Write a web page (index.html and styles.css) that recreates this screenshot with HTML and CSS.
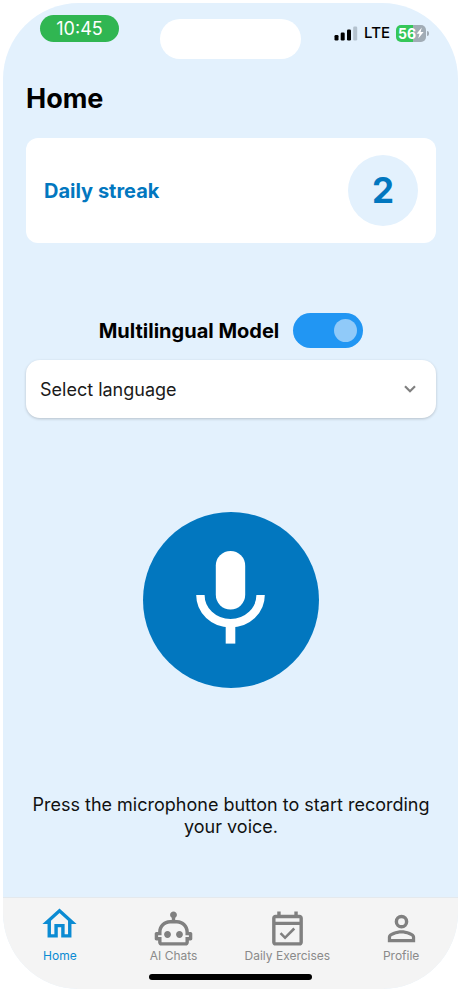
FILE: index.html
```html
<!DOCTYPE html>
<html lang="en">
<head>
<meta charset="utf-8">
<meta name="viewport" content="width=device-width, initial-scale=1">
<title>Home</title>
<link rel="stylesheet" href="styles.css">
</head>
<body>
<div class="phone">
  <header class="status">
    <div class="status-left"><time class="clock">10:45</time></div>
    <div class="island"></div>
    <div class="status-right">
      <svg class="signal" viewBox="0 0 24 16" aria-hidden="true">
        <rect x="0.5" y="10" width="4" height="5.5" rx="1.2"/>
        <rect x="6.7" y="7.5" width="4" height="8" rx="1.2"/>
        <rect x="13" y="4.5" width="4" height="11" rx="1.2"/>
        <rect x="19.2" y="1.5" width="4" height="14" rx="1.2" fill="#b4c2ce"/>
      </svg>
      <span class="network">LTE</span>
      <div class="battery">
        <span>56</span>
        <svg class="bolt" viewBox="0 0 8 12" aria-hidden="true"><path d="M5.8 0.5 0.6 6.8H3.5L2.3 11.5 7.6 5.1H4.6Z"/></svg>
      </div>
    </div>
  </header>

  <main class="content">
    <h1>Home</h1>
    <section class="streak">
      <h2>Daily streak</h2>
      <span class="count">2</span>
    </section>
    <div class="model">
      <label for="multi">Multilingual Model</label>
      <input class="switch" type="checkbox" role="switch" id="multi" checked>
    </div>
    <div class="picker">
      <select aria-label="Language">
        <option>Select language</option>
      </select>
      <svg class="chevron" viewBox="0 0 14 10" aria-hidden="true"><path d="M2 2.2 7 7.2 12 2.2"/></svg>
    </div>
    <button class="mic" type="button" aria-label="Record">
      <svg viewBox="0 0 176 176" aria-hidden="true">
        <rect x="72.8" y="39" width="29.4" height="58.5" rx="14.7" fill="#fff"/>
        <path d="M57.4 83C57.4 98.5 70.5 111.2 87.5 111.2S117.6 98.5 117.6 83" fill="none" stroke="#fff" stroke-width="8.4"/>
        <rect x="82.7" y="112" width="9.6" height="19.6" fill="#fff"/>
      </svg>
    </button>
    <p class="hint">Press the microphone button to start recording your voice.</p>
  </main>

  <footer class="bottom">
    <nav class="tabs">
      <a class="tab active" href="#home">
        <svg viewBox="0 2.7 24 24" aria-hidden="true"><path d="M12 5.69L17 10.19V18H15V12H9V18H7V10.19L12 5.69M12 3L2 12H5V20H11V14H13V20H19V12H22L12 3"/></svg>
        <span>Home</span>
      </a>
      <a class="tab" href="#chats">
        <svg viewBox="0 0 24 24" aria-hidden="true"><path d="M17.5 15.5C17.5 16.61 16.61 17.5 15.5 17.5S13.5 16.61 13.5 15.5 14.4 13.5 15.5 13.5 17.5 14.4 17.5 15.5M8.5 13.5C7.4 13.5 6.5 14.4 6.5 15.5S7.4 17.5 8.5 17.5 10.5 16.61 10.5 15.5 9.61 13.5 8.5 13.5M23 15V18C23 18.55 22.55 19 22 19H21V20C21 21.11 20.11 22 19 22H5C3.9 22 3 21.11 3 20V19H2C1.45 19 1 18.55 1 18V15C1 14.45 1.45 14 2 14H3C3 10.13 6.13 7 10 7H11V5.73C10.4 5.39 10 4.74 10 4C10 2.9 10.9 2 12 2S14 2.9 14 4C14 4.74 13.6 5.39 13 5.73V7H14C17.87 7 21 10.13 21 14H22C22.55 14 23 14.45 23 15M21 16H19V14C19 11.24 16.76 9 14 9H10C7.24 9 5 11.24 5 14V16H3V17H5V20H19V17H21V16Z"/></svg>
        <span>AI Chats</span>
      </a>
      <a class="tab" href="#exercises">
        <svg viewBox="0 -1 24 24" aria-hidden="true"><path d="M19 3H18V1H16V3H8V1H6V3H5C3.89 3 3 3.9 3 5V19C3 20.1 3.89 21 5 21H19C20.11 21 21 20.1 21 19V5C21 3.9 20.11 3 19 3M19 19H5V9H19V19M5 7V5H19V7H5M10.56 17.46L16.5 11.53L15.43 10.47L10.56 15.35L8.45 13.23L7.39 14.29L10.56 17.46Z"/></svg>
        <span>Daily Exercises</span>
      </a>
      <a class="tab" href="#profile">
        <svg viewBox="0 0 24 24" aria-hidden="true"><path d="M12 4A4 4 0 0 1 16 8A4 4 0 0 1 12 12A4 4 0 0 1 8 8A4 4 0 0 1 12 4M12 6A2 2 0 0 0 10 8A2 2 0 0 0 12 10A2 2 0 0 0 14 8A2 2 0 0 0 12 6M12 13C14.67 13 20 14.33 20 17V20H4V17C4 14.33 9.33 13 12 13M12 14.9C9.03 14.9 5.9 16.36 5.9 17V18.1H18.1V17C18.1 16.36 14.97 14.9 12 14.9Z"/></svg>
        <span>Profile</span>
      </a>
    </nav>
    <div class="home-bar"></div>
  </footer>
</div>
</body>
</html>
```
FILE: styles.css
```css
* { box-sizing: border-box; }

body {
  margin: 0;
  padding: 3px 0 1px 3px;
  min-height: 100vh;
  display: flex;
  background: #fff;
  color: #000;
  font-family: Inter, "Liberation Sans", sans-serif;
}

h1, h2, p { margin: 0; }

.phone {
  flex: 1;
  display: flex;
  flex-direction: column;
  background: #e3f1fd;
  border-radius: 76px;
  overflow: hidden;
}

/* Status bar */
.status {
  display: grid;
  grid-template-columns: 1fr 141px 1fr;
  align-items: start;
  padding: 12px 28px 0;
}

.status-left { padding-left: 9px; }

.clock {
  display: block;
  width: 79px;
  border-radius: 14px;
  background: #30b652;
  color: #fff;
  font-size: 18px;
  line-height: 27px;
  text-align: center;
}

.island {
  height: 40px;
  margin-top: 4px;
  border-radius: 20px;
  background: #fff;
}

.status-right {
  display: flex;
  justify-content: flex-end;
  align-items: center;
  gap: 6px;
  height: 36px;
  padding-right: 4px;
}

.signal { width: 24px; height: 16px; }

.network { font-size: 15px; font-weight: 500; line-height: 20px; }

.battery {
  position: relative;
  display: flex;
  align-items: center;
  justify-content: center;
  width: 30px;
  height: 17px;
  border-radius: 5px;
  background: linear-gradient(90deg, #35c759 56%, #a1acb5 56%);
  color: #fff;
  font-size: 14px;
  font-weight: 700;
  line-height: 17px;
}

.battery::after {
  content: "";
  position: absolute;
  right: -3px;
  top: 6px;
  width: 2px;
  height: 5px;
  border-radius: 0 2px 2px 0;
  background: #a1acb5;
}

.bolt { width: 8px; height: 12px; fill: #fff; }

/* Content */
.content {
  flex: 1;
  display: flex;
  flex-direction: column;
  padding: 23px 22px 0 23px;
}

h1 {
  font-size: 27px;
  font-weight: 700;
  line-height: 34px;
}

.streak {
  display: flex;
  align-items: center;
  justify-content: space-between;
  margin-top: 22px;
  padding: 17px 18px;
  border-radius: 12px;
  background: #fff;
  color: #0277bf;
}

h2 { font-size: 20px; font-weight: 700; line-height: 24px; }

.count {
  width: 70px;
  border-radius: 50%;
  background: #e3f1fd;
  font-size: 35px;
  font-weight: 700;
  line-height: 71px;
  text-align: center;
}

.model {
  display: flex;
  align-items: center;
  justify-content: center;
  gap: 14px;
  margin-top: 70px;
  font-size: 20px;
  font-weight: 700;
}

.switch {
  appearance: none;
  display: flex;
  align-items: center;
  justify-content: flex-start;
  width: 70px;
  height: 35px;
  margin: 0;
  padding: 0 6px;
  border-radius: 18px;
  background: #b0bec5;
}

.switch::before {
  content: "";
  width: 23px;
  height: 23px;
  border-radius: 50%;
  background: #90caf9;
}

.switch:checked { justify-content: flex-end; background: #2196f3; }

.picker { position: relative; margin-top: 12px; }

.picker select {
  appearance: none;
  display: block;
  width: 100%;
  height: 58px;
  padding: 0 48px 0 14px;
  border: 0;
  border-radius: 14px;
  background: #fff;
  box-shadow: 0 1px 3px rgba(0, 0, 0, 0.2);
  color: #1a1a1a;
  font: 18px Inter, "Liberation Sans", sans-serif;
}

.chevron {
  position: absolute;
  top: 24px;
  right: 19px;
  width: 14px;
  height: 10px;
  fill: none;
  stroke: #808080;
  stroke-width: 2.2;
  pointer-events: none;
}

.mic {
  align-self: center;
  width: 176px;
  height: 176px;
  margin-top: 94px;
  padding: 0;
  border: 0;
  border-radius: 50%;
  background: #0277bf;
}

.mic svg { display: block; width: 100%; }

.hint {
  margin-top: 106px;
  color: #111;
  font-size: 18px;
  line-height: 22px;
  text-align: center;
}

/* Bottom navigation */
.bottom { background: #f4f4f4; border-top: 1px solid #e4e9ed; }

.tabs {
  display: grid;
  grid-template-columns: repeat(4, 1fr);
  padding-top: 10px;
}

.tab {
  display: flex;
  flex-direction: column;
  align-items: center;
  color: #8a8a8a;
  font-size: 12px;
  line-height: 14px;
  text-decoration: none;
}

.tab svg { width: 41px; height: 41px; fill: #808080; }

.tab.active { color: #0b8bd3; }

.tab.active svg { fill: #0b8bd3; }

.home-bar {
  width: 163px;
  height: 6px;
  margin: 11px auto 9px;
  border-radius: 3px;
  background: #000;
}
```
